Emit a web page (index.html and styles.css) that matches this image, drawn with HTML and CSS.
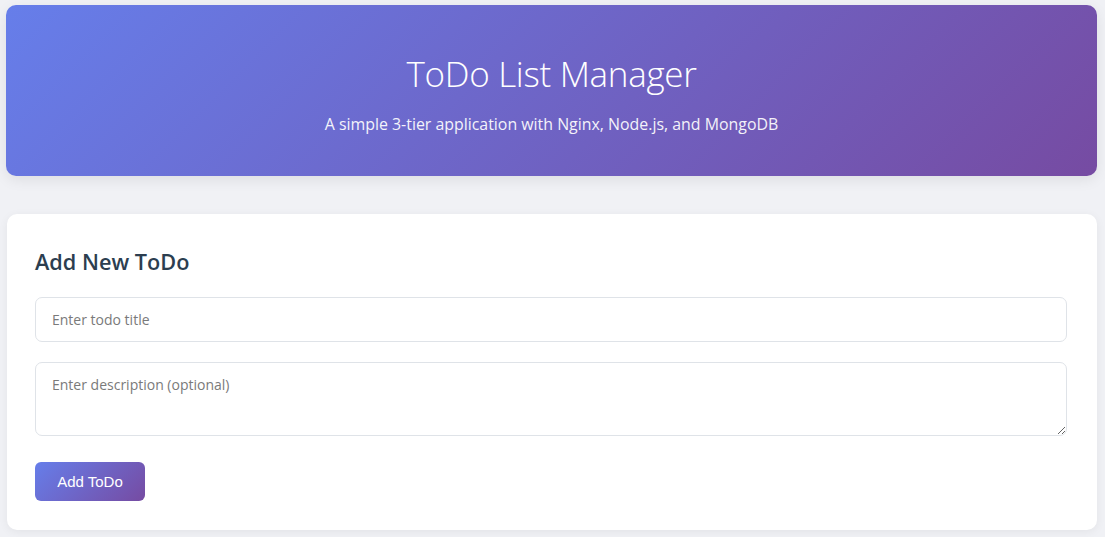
FILE: index.html
```html
<!DOCTYPE html>
<html lang="en">
<head>
<meta charset="utf-8">
<title>ToDo List Manager</title>
<link rel="stylesheet" href="styles.css">
</head>
<body>
<div class="page">
  <header class="hero">
    <h1 class="hero-title">ToDo List Manager</h1>
    <p class="hero-sub">A simple 3-tier application with Nginx, Node.js, and MongoDB</p>
  </header>
  <section class="card">
    <h2 class="card-title">Add New ToDo</h2>
    <form class="form">
      <input class="field" type="text" placeholder="Enter todo title">
      <textarea class="field area" placeholder="Enter description (optional)"></textarea>
      <div class="actions"><button class="btn" type="button">Add ToDo</button></div>
    </form>
  </section>
</div>
</body>
</html>
```
FILE: styles.css
```css
* { box-sizing: border-box; }
html, body { margin: 0; height: 100%; }
body {
  background: #f0f1f5;
  font-family: "Open Sans", "Noto Sans", sans-serif;
  color: #2c3e50;
  overflow: hidden;
}
.page {
  padding: 5px 8px 0 6px;
  display: flex;
  flex-direction: column;
  gap: 38px;
}
.hero {
  height: 171px;
  border-radius: 10px;
  background: linear-gradient(135deg, #667eea 0%, #764ba2 100%);
  color: #fff;
  text-align: center;
  display: flex;
  flex-direction: column;
  align-items: center;
  padding-top: 47px;
  box-shadow: 0 4px 14px rgba(0,0,0,0.08);
}
.hero-title {
  margin: 0;
  font-weight: 300;
  font-size: 35px;
  line-height: 44px;
  letter-spacing: -0.3px;
}
.hero-sub {
  margin: 18px 0 0;
  font-size: 15.9px;
  line-height: 20px;
  opacity: 0.92;
}
.card {
  margin-left: 1px;
  background: #fff;
  border-radius: 10px;
  padding: 33px 30px 29px 28px;
  box-shadow: 0 2px 10px rgba(0,0,0,0.06);
}
.card-title {
  margin: 0 0 20px;
  font-size: 21.7px;
  font-weight: 600;
  line-height: 30px;
  color: #2c3e50;
}
.form {
  display: flex;
  flex-direction: column;
  gap: 20px;
}
.field {
  display: block;
  width: 100%;
  height: 45px;
  border: 1px solid #dfe3e8;
  border-radius: 7px;
  padding: 0 16px;
  font-family: "Open Sans", "Noto Sans", sans-serif;
  font-size: 14px;
  color: #333;
  background: #fff;
  outline: none;
}
.field::placeholder { color: #7a7a7a; }
.area {
  height: 74px;
  padding: 12px 16px;
  resize: vertical;
}
.actions { display: flex; padding-top: 6px; }
.btn {
  width: 110px;
  height: 39px;
  border: none;
  border-radius: 6px;
  background: linear-gradient(135deg, #667eea 0%, #764ba2 100%);
  color: #fff;
  font-family: "Liberation Sans", Arial, sans-serif;
  font-size: 15px;
}
```
